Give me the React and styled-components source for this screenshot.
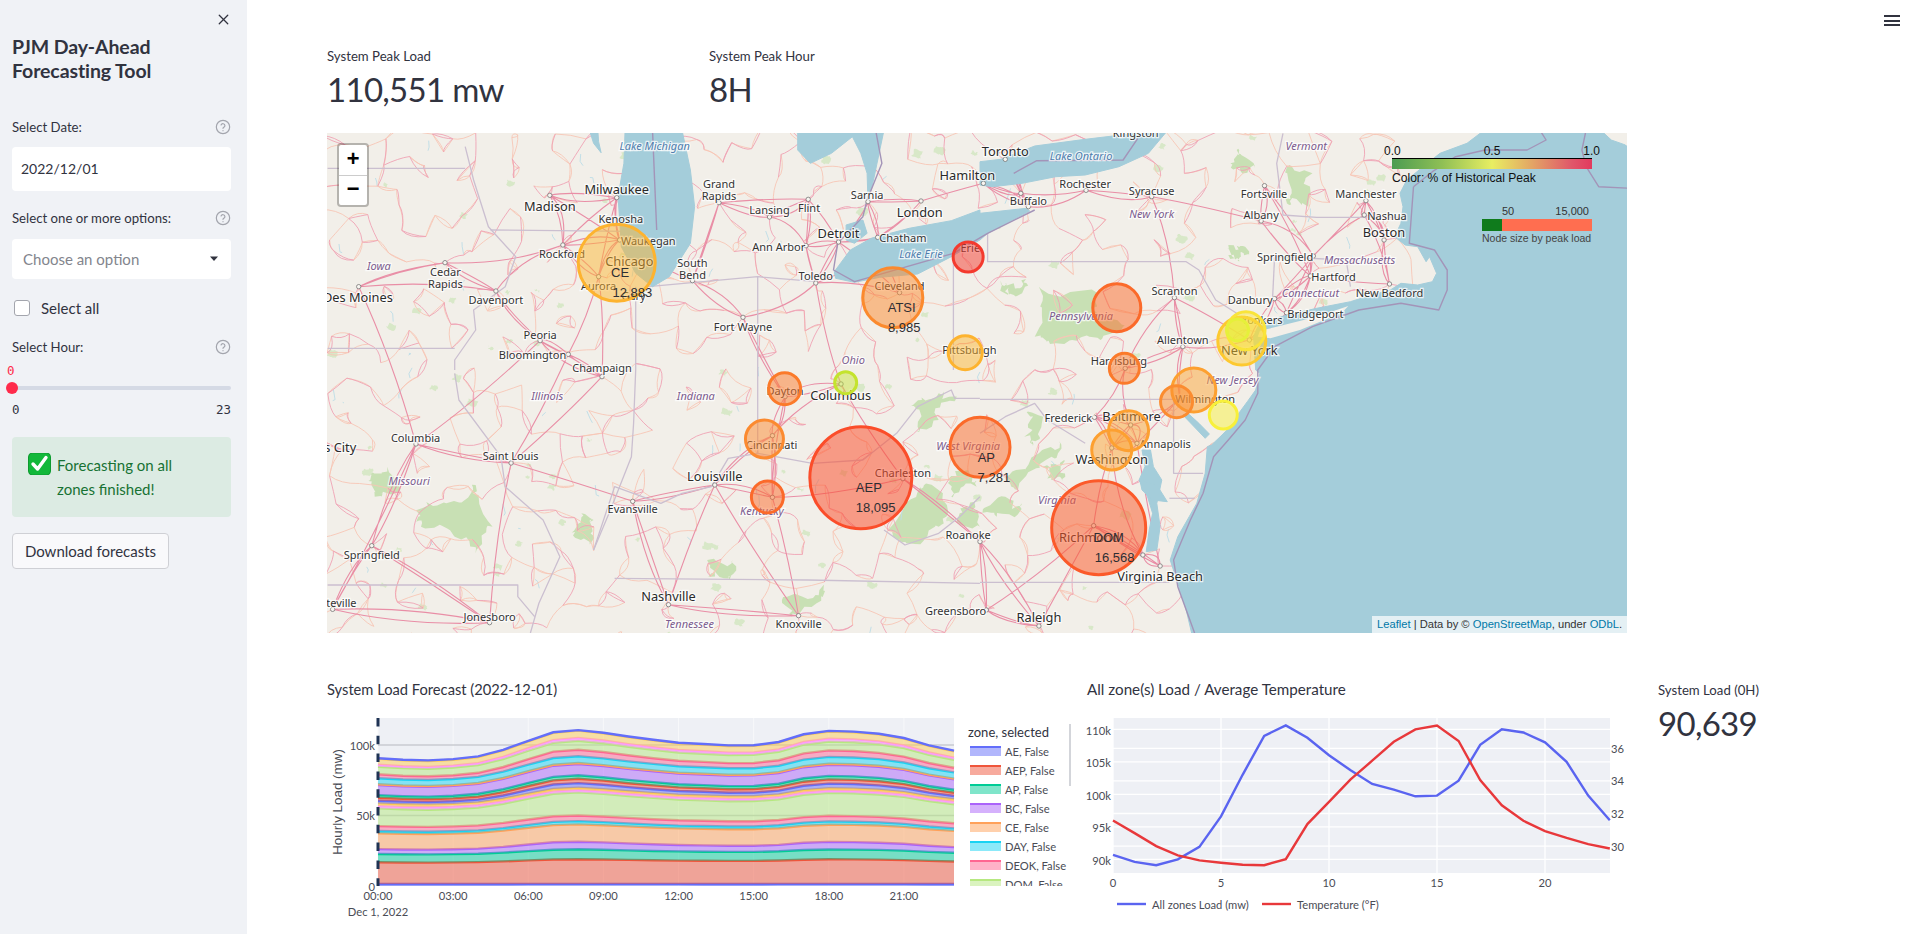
import React from "react";
import styled, { createGlobalStyle } from "styled-components";
import { X } from "lucide-react";

const UI = `Lato, "Noto Sans", sans-serif`;

const Global = createGlobalStyle`
  html, body { margin: 0; padding: 0; height: 100%; overflow: hidden; background: #fff; }
  body { font-family: ${UI}; color: #31333f; }
  * { box-sizing: border-box; }
`;

const Shell = styled.div`display: flex; width: 1912px; height: 934px; overflow: hidden; position: relative;`;
const Sidebar = styled.aside`width: 247px; flex: none; height: 100%; background: #f0f2f6; padding: 0 16px 0 12px;`;
const CloseRow = styled.div`height: 35px; display: flex; justify-content: flex-end; align-items: flex-end; padding: 0 0 7px; margin-right: -1px; color: #31333f;`;
const Title = styled.h1`margin: 0 0 34px; font-size: 19.5px; line-height: 24px; font-weight: 700; color: #31333f; letter-spacing: -0.1px;`;
const LabelRow = styled.div`height: 20px; display: flex; justify-content: space-between; align-items: center; font-size: 13.2px; color: #31333f; margin-top: ${p => p.$top}px;`;
const Field = styled.div`height: ${p => p.$h}px; margin-top: ${p => p.$top}px; background: #fff; border-radius: 4px; display: flex; align-items: center; justify-content: space-between; font-size: ${p => p.$size}px; padding: 0 12px 1px ${p => p.$pad}px; color: ${p => p.$muted ? "#83858d" : "#31333f"};`;
const CheckRow = styled.label`display: flex; align-items: center; gap: 9px; height: 20px; margin-top: 19px; padding-left: 2px; font-size: 15px;`;
const CheckBox = styled.span`width: 16px; height: 16px; background: #fff; border: 1.5px solid #a3a5ad; border-radius: 3px; margin-right: 2px;`;
const SliderBlock = styled.div`position: relative; height: 70px; margin-top: 0;`;
const SliderValue = styled.span`position: absolute; left: -5px; top: 6px; font: 12.5px "DejaVu Sans Mono", monospace; color: #ff2b4b;`;
const Track = styled.div`position: absolute; left: 0; right: 0; top: 29px; height: 4px; border-radius: 2px; background: #d5dae5;`;
const Thumb = styled.div`position: absolute; left: -6px; top: 25px; width: 12px; height: 12px; border-radius: 50%; background: #ff2b4b;`;
const SliderEnds = styled.div`position: absolute; left: 0; right: 0; top: 45px; display: flex; justify-content: space-between; font: 12.5px "DejaVu Sans Mono", monospace; color: #31333f;`;
const Alert = styled.div`margin-top: 10px; height: 80px; padding: 16px 16px 0 16px; border-radius: 4px; background: #dcebe3; color: #177233; display: flex; gap: 6px; font-size: 15px; line-height: 24px;`;
const AlertText = styled.span`width: 130px;`;
const Download = styled.button`display: block; margin-top: 16px; width: 157px; height: 36px; padding: 0 0 1px; background: #f9f9fb; border: 1px solid #cfd0d5; border-radius: 4px; font: 15px ${UI}; color: #31333f;`;

const Main = styled.main`flex: 1; min-width: 0; padding: 46px 0 0 80px;`;
const Menu = styled.div`position: absolute; top: 15px; right: 12px; width: 16px; display: flex; flex-direction: column; gap: 2.5px;`;
const MenuBar = styled.span`height: 2px; background: #31333f;`;
const Metrics = styled.div`display: grid; grid-template-columns: 382px 381px;`;
const MetricLabel = styled.div`font-size: 13.2px; line-height: 20px; color: #31333f;`;
const MetricValue = styled.div`font-size: 33px; line-height: 47px; color: #31333f; letter-spacing: -0.7px; font-weight: 400;`;
const MapFrame = styled.div`position: relative; width: 1300px; height: 500px; margin-top: 20px; overflow: hidden; background: #f2efe9;`;
const MapSvg = styled.svg`display: block; width: 1300px; height: 500px;`;
const Zoom = styled.div`position: absolute; left: 10px; top: 10px; width: 32px; border: 2px solid rgba(0,0,0,.25); border-radius: 4px; background: #fff; background-clip: padding-box; overflow: hidden;`;
const ZoomBtn = styled.div`height: 30px; display: flex; align-items: center; justify-content: center; font: 700 22px "Liberation Mono", monospace; color: #000; & + & { border-top: 1px solid #ccc; }`;
const Attribution = styled.div`position: absolute; right: 0; bottom: 0; height: 17px; padding: 0 5px; background: rgba(255,255,255,.7); font: 11.2px/17px "Liberation Sans", sans-serif; color: #333; white-space: nowrap;`;
const Link = styled.span`color: #0078a8;`;
const ColorLegend = styled.div`position: absolute; left: 1065px; top: 11px; width: 200px; font-family: "Liberation Sans", sans-serif; color: #111;`;
const Ticks = styled.div`display: flex; justify-content: space-between; font-size: 12px; line-height: 14px; margin: 0 -8px 0 -8px;`;
const Gradient = styled.div`height: 11px; border-top: 1px solid #000; background: linear-gradient(90deg, #4c9c52 0%, #8fbf55 25%, #e8ee62 50%, #e3a565 70%, #e0566a 90%, #e23a5e 100%);`;
const Caption = styled.div`font-size: 12.1px; line-height: 16px; margin-top: 1px; white-space: nowrap;`;
const SizeLegend = styled.div`position: absolute; left: 1155px; top: 71px; width: 110px; font-family: "Liberation Sans", sans-serif; color: #333;`;
const SizeTicks = styled.div`display: flex; justify-content: space-between; font-size: 11px; line-height: 14px; padding: 0 3px 0 20px;`;
const SizeBar = styled.div`height: 12px; margin-top: 1px; background: linear-gradient(90deg, #0f7b1c 0 20px, #ff6e50 20px);`;
const SizeCaption = styled.div`font-size: 10.5px; line-height: 14px; white-space: nowrap; color: #444;`;
const BottomRow = styled.div`display: flex; margin: 27px 0 0 1px; height: 260px;`;
const Chart = styled.svg`display: block; flex: none; width: ${p => p.$w}px; height: 260px; overflow: visible;`;
const SideMetric = styled.div`margin-left: 18px; padding-top: 20px;`;

const HelpIcon = () => (
  <svg width="16" height="16" viewBox="0 0 24 24" fill="none" stroke="#a3a5ad" strokeWidth="1.8" strokeLinecap="round">
    <circle cx="12" cy="12" r="10" />
    <path d="M9.1 9a3 3 0 0 1 5.8 1c0 2-2.9 2.6-2.9 4" />
    <path d="M12 17.5h.01" />
  </svg>
);
const Caret = () => (
  <svg width="10" height="6" viewBox="0 0 10 6"><path d="M1 .5h8L5 5z" fill="#31333f" /></svg>
);
const CheckEmoji = () => (
  <svg width="23" height="22" viewBox="0 0 23 22" style={{ flex: "none", marginTop: 0 }}>
    <rect x="0.5" y="0" width="22" height="22" rx="4" fill="#12b83a" />
    <rect x="0.5" y="0" width="22" height="22" rx="4" fill="none" stroke="#0d9a2f" />
    <path d="M5 11l4.6 5L18 4.5" fill="none" stroke="#fff" strokeWidth="3.4" strokeLinecap="round" strokeLinejoin="round" />
  </svg>
);

/* ---------- map drawing ---------- */
const PAN = { a: [-7, -3], b: [653, -3], c: [-7, 237], d: [653, 237] };
const at = (p, x, y) => [PAN[p][0] + x / 2.376, PAN[p][1] + y / 3];
const parse = (p, s) => s.trim().split(/\s+/).map(t => { const [x, y] = t.split(",").map(Number); return at(p, x, y); });
const pointsOf = (...segs) => {
  const pts = [];
  for (let i = 0; i < segs.length; i += 2) pts.push(...parse(segs[i], segs[i + 1]));
  return pts;
};
const toPath = pts => "M" + pts.map(q => q[0].toFixed(1) + " " + q[1].toFixed(1)).join("L");
const poly = (...segs) => toPath(pointsOf(...segs));

let seed = 7;
const rnd = () => { seed = (seed * 16807) % 2147483647; return seed / 2147483647; };
const roughen = (pts, amp) => {
  let cur = pts;
  for (let k = 0; k < 3; k++) {
    const next = [];
    cur.forEach((q, i) => {
      const r = cur[(i + 1) % cur.length];
      next.push(q, [(q[0] + r[0]) / 2 + (rnd() - .5) * amp, (q[1] + r[1]) / 2 + (rnd() - .5) * amp]);
    });
    cur = next;
    amp *= .6;
  }
  return toPath(cur) + "Z";
};

const WATER = [
  poly("a", "640,0 650,40 668,68 662,35 660,0"),
  poly("a", "725,0 722,100 708,200 712,270 716,350 750,430 790,470 830,440 880,340 890,230 880,120 860,0"),
  poly("a", "1135,0 1135,60 1165,100 1215,70 1265,20 1285,70 1300,130 1302,215 1315,150 1340,0"),
  poly("a", "1250,285 1290,270 1300,310 1270,340 1250,330"),
  poly("a", "1222,425 1260,360 1310,325 1400,295 1500,272 1568,240", "b", "0,250 110,235 118,243 18,310 0,330", "a", "1568,330 1500,380 1420,432 1330,442 1270,457 1225,445"),
  poly("b", "0,95 50,88 130,48 250,28 370,10 390,-5 450,-5 400,70 330,110 250,135 180,140 100,160 30,170 0,165"),
  poly("b", "1204,-5 1157,40 1093,70 1053,110 1014,150 998,190 1005,230 1000,280 985,320 1010,345 1040,350 1060,395 1068,380 1085,430 1075,455 1040,465 1000,460 975,480 930,495 880,515 800,535 730,555 690,570 660,590 650,620 655,720", "d", "665,10 655,60 635,95 615,130 610,150 575,195 550,225 540,230 535,310 515,400 497,440 470,500 452,570 470,640 490,720 505,800 1545,800", "b", "1545,50 1500,30 1470,-5"),
  poly("d", "385,240 392,290 378,330 398,380 410,430 402,480 395,545 420,540 428,470 420,400 432,330 412,290 405,240"),
  poly("d", "482,135 505,165 535,205 545,192 520,160 494,130"),
  poly("d", "380,330 420,345 445,395 410,390 385,360"),
];
const LAND_OVER = [
  poly("b", "660,620 690,625 760,600 860,548 875,528 800,560 700,592 665,602"),
  poly("b", "1490,-5 1510,20 1545,55 1545,-5"),
];
const FOREST = [
  pointsOf("b", "140,470 280,490 270,540 340,590 260,620 180,640 130,620"),
  pointsOf("b", "60,460 100,450 100,490 70,490"),
  pointsOf("b", "610,60 640,90 620,125 595,100"),
  pointsOf("b", "730,130 790,130 780,230 735,225"),
  pointsOf("b", "590,345 630,350 620,380 590,375"),
  pointsOf("c", "230,420 300,400 370,345 410,470 370,550 320,500 240,470"),
  pointsOf("c", "1400,110 1470,70 1510,90 1470,150 1420,170"),
  pointsOf("c", "1490,330 1540,300 1560,350 1500,380"),
  pointsOf("c", "1350,480 1420,340 1480,370 1470,470 1400,520"),
  pointsOf("c", "1520,430 1568,390 1568,470"),
  pointsOf("c", "1110,680 1200,640 1180,700 1120,740"),
  pointsOf("c", "920,570 980,570 970,620 930,610"),
  pointsOf("c", "610,470 650,450 650,500 620,510"),
  pointsOf("c", "120,310 160,290 180,370 130,380"),
  pointsOf("d", "120,150 150,140 120,220 105,200"),
  pointsOf("d", "0,430 60,380 100,400 40,440"),
  pointsOf("d", "60,320 140,250 190,220 170,260 90,360"),
  pointsOf("d", "150,290 200,270 190,320 160,320"),
].map(p => roughen(p, 16));
const SPECKS = Array.from({ length: 110 }, () => {
  const x = rnd() * 1060, y = rnd() * 500, s = 3 + rnd() * 7;
  return roughen([[x, y], [x + s, y + s * .3], [x + s * .7, y + s], [x - s * .3, y + s * .7]], 3);
}).join("");
const STREAMS = Array.from({ length: 70 }, () => {
  const x = rnd() * 1060, y = rnd() * 500;
  return `M${x.toFixed(1)} ${y.toFixed(1)}l${(rnd() * 8 - 4).toFixed(1)} ${(rnd() * 10).toFixed(1)}l${(rnd() * 6 - 3).toFixed(1)} ${(rnd() * 8).toFixed(1)}`;
}).join("");
const BORDERS = [
  poly("a", "18,115 345,115"),
  poly("a", "345,50 365,150 400,290 465,380 440,470 365,540 370,600 320,690 320,720"),
  poly("a", "405,300 800,305"),
  poly("a", "18,655 320,655"),
  poly("a", "750,470 750,720"),
  poly("a", "780,470 1040,440 1180,455"),
  poly("a", "1040,440 1040,720"),
  poly("a", "1505,390 1505,720"),
  poly("c", "1040,0 1040,250 970,265 930,350 860,370 810,400 700,350 650,540"),
  poly("c", "750,0 745,160 740,260 690,420 650,540"),
  poly("c", "320,10 330,90 430,260 440,350 530,450 570,560 520,700 500,789"),
  poly("c", "700,625 1160,630 1568,640"),
  poly("c", "18,645 470,645 470,680 510,740"),
  poly("c", "1040,250 1170,280 1290,270 1370,190 1420,110 1500,60 1508,85 1568,85"),
  poly("c", "1340,480 1390,525 1470,490 1520,440 1568,380"),
  poly("d", "0,88 460,88"),
  poly("d", "460,85 460,310 530,310"),
  poly("d", "0,637 450,637"),
  poly("d", "450,385 510,385"),
  poly("d", "0,190 60,140 130,100 160,150 250,220"),
  poly("b", "18,310 18,395 490,395 520,420 560,510 610,550"),
  poly("b", "720,10 705,100 720,255 800,262 1000,262"),
  poly("b", "700,380 870,390 880,470"),
  poly("b", "700,380 695,510"),
];
const SEA_LINES = [
  poly("a", "790,0 800,300"),
  poly("a", "1320,0 1335,100 1300,210 1290,260 1230,340 1220,420 1270,455 1505,370", "b", "18,310 130,240"),
  poly("b", "80,130 135,92 340,90 375,25"),
  poly("b", "1030,170 1020,340 1080,360 1110,420 1110,480 1090,540 1000,520 900,540 790,590 700,650 660,720", "d", "660,70 630,150 590,210 555,260 530,370 500,450 460,570 470,650 510,789"),
  poly("b", "1030,170 1075,125 1130,80 1200,60 1300,60 1345,30 1330,0"),
  poly("b", "1545,175 1470,170 1440,110 1430,60 1440,0"),
];

const CITY = [
  ["a",705,203],["a",546,196],["a",948,218],["a",1068,261],["a",1160,208],["a",1302,215],["a",1428,213],["a",712,330],["a",577,345],["a",885,452],["a",1232,336],["a",1325,322],["a",1155,347],["a",297,398],["a",92,470],["a",418,483],["a",662,440],["a",1178,459],["a",1377,488],["a",1005,562],["a",523,632],["a",590,673],["a",670,740],
  ["c",1238,42],["c",1105,80],["c",1075,197],["c",228,222],["c",454,279],["c",938,345],["c",1385,326],["c",743,394],["c",1075,382],["c",123,527],["c",828,704],["c",403,758],["c",1137,737],["c",30,718],
  ["b",60,88],["b",8,160],["b",252,181],["b",408,200],["b",676,167],["b",917,212],["b",97,190],["b",115,230],["b",668,273],["b",913,255],["b",960,330],["b",792,378],["b",785,438],["b",462,503],["b",973,462],["b",700,506],["b",728,548],["b",482,650],["b",640,630],["b",345,715],
  ["d",475,85],["d",272,142],["d",358,165],["d",373,220],["d",313,234],["d",270,467],["d",387,555],["d",428,588],["d",15,720],["d",140,768],["d",0,515],
].map(([p, x, y]) => at(p, x, y));

const HUBS = [];
for (let x = -10; x < 1090; x += 25) for (let y = -10; y < 520; y += 25) HUBS.push([x + rnd() * 22, y + rnd() * 22]);
const nearest = (q, list, n) => list.filter(o => o !== q).map(o => [Math.hypot(o[0] - q[0], o[1] - q[1]), o]).sort((u, v) => u[0] - v[0]).slice(0, n).map(u => u[1]);
const wiggle = (u, v, amp) => {
  const mx = (u[0] + v[0]) / 2 + (rnd() - .5) * amp, my = (u[1] + v[1]) / 2 + (rnd() - .5) * amp;
  return `M${u[0].toFixed(1)} ${u[1].toFixed(1)}Q${mx.toFixed(1)} ${my.toFixed(1)} ${v[0].toFixed(1)} ${v[1].toFixed(1)}`;
};
const MOTORWAY = CITY.flatMap(c => nearest(c, CITY, 3).map(o => wiggle(c, o, 24))).join("");
const LINKS = HUBS.flatMap(h => nearest(h, HUBS.concat(CITY), 2).map(o => wiggle(h, o, 12)));
const PINK = LINKS.filter((_, i) => i % 5 < 2).join("");
const PEACH = LINKS.filter((_, i) => i % 5 >= 2).join("");

const LABELS = [
  ["a",795,45,"Lake Michigan","w"],["a",705,178,"Milwaukee","l"],["a",546,228,"Madison","l"],["a",948,160,"Grand","s"],["a",948,195,"Rapids","s"],["a",1068,238,"Lansing","s"],["a",1162,232,"Flint","s"],["a",1300,193,"Sarnia","s"],["a",1425,245,"London","l"],["a",715,265,"Kenosha","s"],["a",780,330,"Waukegan","s"],["a",575,370,"Rockford","s"],["a",735,393,"Chicago","l"],["a",885,397,"South","s"],["a",885,432,"Bend","s"],["a",1232,308,"Detroit","l"],["a",1385,323,"Chatham","s"],["a",1090,348,"Ann Arbor","s"],["a",1428,370,"Lake Erie","w"],["a",1545,352,"Erie","s"],["a",140,405,"Iowa","i"],["a",298,425,"Cedar","s"],["a",298,460,"Rapids","s"],["a",90,500,"Des Moines","l"],["a",418,508,"Davenport","s"],["a",662,465,"Aurora","s"],["a",1178,437,"Toledo","s"],["a",1377,465,"Cleveland","s"],["a",1005,590,"Fort Wayne","s"],["a",523,612,"Peoria","s"],["a",505,674,"Bloomington","s"],["a",670,712,"Champaign","s"],["a",1267,688,"Ohio","i"],["a",745,497,"Gary","s"],
  ["c",540,75,"Illinois","i"],["c",893,75,"Indiana","i"],["c",1237,75,"Columbus","l"],["c",1105,60,"Dayton","s"],["c",227,201,"Columbia","s"],["c",5,230,"Kansas City","l"],["c",453,257,"Saint Louis","s"],["c",212,330,"Missouri","i"],["c",1073,222,"Cincinnati","s"],["c",938,318,"Louisville","l"],["c",1385,307,"Charleston","s"],["c",1540,227,"West Virginia","i"],["c",743,416,"Evansville","s"],["c",1050,420,"Kentucky","i"],["c",1540,493,"Roanoke","s"],["c",123,553,"Springfield","s"],["c",18,698,"Fayetteville","s"],["c",828,677,"Nashville","l"],["c",403,738,"Jonesboro","s"],["c",878,760,"Tennessee","i"],["c",1137,760,"Knoxville","s"],["c",1510,720,"Greensboro","s"],
  ["b",60,62,"Toronto","l"],["b",240,75,"Lake Ontario","w"],["b",370,6,"Kingston","s"],["b",775,45,"Vermont","i"],["b",-30,135,"Hamilton","l"],["b",250,160,"Rochester","s"],["b",408,180,"Syracuse","s"],["b",675,190,"Fortsville","s"],["b",917,189,"Manchester","s"],["b",115,210,"Buffalo","s"],["b",408,250,"New York","i"],["b",668,254,"Albany","s"],["b",967,255,"Nashua","s"],["b",960,305,"Boston","l"],["b",725,380,"Springfield","s"],["b",902,388,"Massachusetts","i"],["b",840,440,"Hartford","s"],["b",462,482,"Scranton","s"],["b",973,487,"New Bedford","s"],["b",785,488,"Connecticut","i"],["b",642,508,"Danbury","s"],["b",797,549,"Bridgeport","s"],["b",670,568,"Yonkers","s"],["b",240,556,"Pennsylvania","i"],["b",482,628,"Allentown","s"],["b",640,660,"New York","l"],["b",330,690,"Harrisburg","s"],["b",-25,658,"Pittsburgh","s"],
  ["d",600,27,"New Jersey","i"],["d",535,85,"Wilmington","s"],["d",210,142,"Frederick","s"],["d",360,137,"Baltimore","l"],["d",440,220,"Annapolis","s"],["d",313,266,"Washington","l"],["d",183,387,"Virginia","i"],["d",260,500,"Richmond","l"],["d",428,617,"Virginia Beach","l"],["d",140,741,"Raleigh","l"],
];

const MapLabel = styled.text`
  text-anchor: middle;
  dominant-baseline: central;
  paint-order: stroke;
  stroke: rgba(255,255,255,.75);
  stroke-width: 2.5px;
  font-family: "Noto Sans", sans-serif;
  font-size: ${p => ({ s: 11, l: 12.8, i: 11, w: 11 }[p.$kind])}px;
  font-style: ${p => (p.$kind === "i" || p.$kind === "w") ? "italic" : "normal"};
  fill: ${p => ({ s: "#333", l: "#2a2a2a", i: "#7b5c8e", w: "#4f7dad" }[p.$kind])};
`;
const ZoneText = styled.text`
  text-anchor: middle;
  dominant-baseline: central;
  font-family: "Liberation Sans", sans-serif;
  font-size: 13px;
  fill: #2e2e33;
`;

const NODES = [
  ["a",705,398,38.5,"#fdb32f",.48],
  ["a",1361,503,30,"#fb8a2e",.5],
  ["a",1540,381,15,"#f43a2e",.5],
  ["a",1533,668,17,"#fdb32f",.48],
  ["b",325,533,24,"#fb6a2a",.5],
  ["b",343,715,15,"#fb7a2a",.5],
  ["b",622,633,24,"#fdc92f",.48],
  ["b",632,602,19,"#f9e43a",.48],
  ["b",612,600,11,"#e6f03a",.6],
  ["d",508,60,22,"#fda030",.48],
  ["d",467,95,16,"#fb8c30",.5],
  ["d",578,135,14,"#f8f03a",.48],
  ["d",353,182,20,"#fda030",.48],
  ["d",313,240,20,"#fda030",.48],
  ["d",0,232,30,"#fb6a2a",.5],
  ["d",282,473,47,"#fb5a2a",.52],
  ["c",1104,56,16,"#fb7a2a",.5],
  ["c",1249,38,11,"#c4e32e",.45],
  ["c",1056,207,19,"#fb8a30",.5],
  ["c",1063,381,16,"#fb6a2a",.5],
  ["c",1285,323,51,"#fb4d2a",.52],
];
const ZONE_TEXT = [
  ["a",713,427,"CE"],["a",742,488,"12,883"],["a",1382,533,"ATSI"],["a",1388,592,"8,985"],
  ["d",15,262,"AP"],["d",33,322,"7,281"],["d",306,503,"DOM"],["d",320,562,"16,568"],
  ["c",1304,352,"AEP"],["c",1320,412,"18,095"],
];

const MapDrawing = () => (
  <MapSvg viewBox="0 0 1300 500">
    <rect width="1300" height="500" fill="#f2efe9" />
    {FOREST.map((d, i) => <path key={i} d={d} fill="#c8e0b4" />)}
    <path d={SPECKS} fill="#d8e8c8" />
    <path d={STREAMS} fill="none" stroke="#bcdce6" strokeWidth=".9" />
    <path d={PEACH} fill="none" stroke="#f7c6b6" strokeWidth=".9" />
    <path d={PINK} fill="none" stroke="#efa3b4" strokeWidth=".9" />
    <path d={MOTORWAY} fill="none" stroke="#e98ea6" strokeWidth="1.1" />
    <g fill="none" stroke="#cbbfd0" strokeWidth="1.3" strokeLinejoin="round">
      {BORDERS.map((d, i) => <path key={i} d={d} />)}
    </g>
    {WATER.map((d, i) => <path key={i} d={d + "Z"} fill="#a4cdda" stroke="#a4cdda" strokeWidth="1" strokeLinejoin="round" />)}
    {LAND_OVER.map((d, i) => <path key={i} d={d + "Z"} fill="#f2efe9" />)}
    <g fill="none" stroke="#a394b8" strokeWidth="1.4" strokeLinejoin="round">
      {SEA_LINES.map((d, i) => <path key={i} d={d} />)}
    </g>
    {CITY.map((c, i) => <circle key={i} cx={c[0]} cy={c[1]} r="2.2" fill="#f7f5f0" stroke="#777" strokeWidth=".8" />)}
    {LABELS.map(([p, x, y, t, k], i) => {
      const q = at(p, x, y);
      return <MapLabel key={i} x={q[0]} y={q[1]} $kind={k}>{t}</MapLabel>;
    })}
    {NODES.map(([p, x, y, r, col, op], i) => {
      const q = at(p, x, y);
      return <circle key={i} cx={q[0]} cy={q[1]} r={r} fill={col} fillOpacity={op} stroke={col} strokeWidth="3" />;
    })}
    {ZONE_TEXT.map(([p, x, y, t], i) => {
      const q = at(p, x, y);
      return <ZoneText key={i} x={q[0]} y={q[1]}>{t}</ZoneText>;
    })}
  </MapSvg>
);

/* ---------- charts ---------- */
const LOAD = [90.67,89.6,89.1,90,91.9,96.6,103,109,110.6,108.7,106,103.7,101.6,100.7,99.7,99.8,102.1,107.6,110,109.5,108,105,99.8,96];
const TEMP = [31.57,30.8,30,29.43,29.12,28.98,28.85,28.83,29.2,31.35,32.72,34.09,35.24,36.4,37.16,37.39,36.45,34.05,32.5,31.55,30.92,30.5,30.12,29.85];
const C0 = [1.4,16.8,22.7,26.2,37.4,39,42.5,55,56.7,58.6,60.5,62.6,64.5,71.6,72.1,76.4,79.2,84.6,86,90.2,90.67];
const C8 = [1.5,19,26,31.4,43.7,46,50,66.4,68,69.7,73,76,78.5,86.5,87.2,92,96.7,103,105,110.2,110.6];
const COLORS = ["#636EFA","#EF553B","#00CC96","#AB63FA","#FFA15A","#19D3F3","#FF6692","#B6E880","#FF97FF","#FECB52"];
const ZONES = ["AE","AEP","AP","BC","CE","DAY","DEOK","DOM"];
const colorAt = i => COLORS[i % COLORS.length];
const ax = h => 50 + h * (576 / 23);
const ay = v => 226 - 1.41 * v;
const frac = h => (LOAD[h] - LOAD[0]) / (LOAD[8] - LOAD[0]);
const cum = (i, h) => i < 0 ? 0 : C0[i] + (C8[i] - C0[i]) * frac(h);
const HOURS = LOAD.map((_, h) => h);

const TickText = styled.text`
  font-family: ${UI};
  font-size: 11.2px;
  fill: #4a4c55;
  dominant-baseline: central;
  text-anchor: ${p => p.$anchor || "middle"};
`;
const ChartTitle = styled.text`font-family: ${UI}; font-size: ${p => p.$size}px; fill: #31333f; dominant-baseline: central;`;
const LegendTitle = styled.text`font-family: ${UI}; font-size: 13px; fill: #31333f; dominant-baseline: central;`;
const AxisTitle = styled.text`font-family: "Liberation Sans", sans-serif; font-size: 13.4px; fill: #4a4c55; text-anchor: middle; dominant-baseline: central;`;

const AreaChart = () => (
  <Chart $w={750} viewBox="0 0 750 260">
    <defs>
      <clipPath id="legendClip"><rect x="630" y="60" width="120" height="166" /></clipPath>
    </defs>
    <ChartTitle x="-1" y="29" $size={14.7}>System Load Forecast (2022-12-01)</ChartTitle>
    <rect x="50" y="58" width="576" height="168" fill="#eef0f5" />
    {[0,3,6,9,12,15,18,21].map(h => <line key={h} x1={ax(h)} x2={ax(h)} y1="58" y2="226" stroke="#f7f8fa" />)}
    {[50,100].map(v => <line key={v} x1="50" x2="626" y1={ay(v)} y2={ay(v)} stroke="#c9cbd1" strokeWidth="1.3" />)}
    {C0.map((_, i) => {
      const top = HOURS.map(h => `${ax(h).toFixed(1)} ${ay(cum(i, h)).toFixed(1)}`);
      const bot = HOURS.slice().reverse().map(h => `${ax(h).toFixed(1)} ${ay(cum(i - 1, h)).toFixed(1)}`);
      return (
        <g key={i}>
          <path d={"M" + top.concat(bot).join("L") + "Z"} fill={colorAt(i)} fillOpacity=".5" />
          <path d={"M" + top.join("L")} fill="none" stroke={colorAt(i)} strokeWidth="2.4" />
        </g>
      );
    })}
    <line x1="50" x2="50" y1="58" y2="226" stroke="#1f3354" strokeWidth="3" strokeDasharray="8.5 9.3" />
    <TickText x="47" y={ay(100)} $anchor="end">100k</TickText>
    <TickText x="47" y={ay(50)} $anchor="end">50k</TickText>
    <TickText x="47" y={ay(0)} $anchor="end">0</TickText>
    <AxisTitle x="9" y="142" transform="rotate(-90 9 142)">Hourly Load (mw)</AxisTitle>
    {[0,3,6,9,12,15,18,21].map(h => <TickText key={h} x={ax(h)} y="235">{String(h).padStart(2, "0")}:00</TickText>)}
    <TickText x="50" y="251">Dec 1, 2022</TickText>
    <LegendTitle x="640" y="72">zone, selected</LegendTitle>
    <g clipPath="url(#legendClip)">
      {ZONES.map((z, i) => {
        const y = 91 + i * 19;
        return (
          <g key={z}>
            <rect x="642" y={y - 5} width="31" height="10" fill={colorAt(i)} fillOpacity=".5" />
            <line x1="642" x2="673" y1={y - 4} y2={y - 4} stroke={colorAt(i)} strokeWidth="2" />
            <TickText x="677" y={y} $anchor="start">{z}, False</TickText>
          </g>
        );
      })}
    </g>
    <line x1="742" x2="742" y1="64" y2="126" stroke="#c5c7ce" strokeWidth="1.5" />
  </Chart>
);

const lx = h => 35 + h * 21.6;
const ly = v => 69.3 + (110 - v) * 6.5;
const ty = t => 88.3 + (36 - t) * 16.3;
const LineChart = () => (
  <Chart $w={562} viewBox="0 0 562 260">
    <ChartTitle x="9" y="29" $size={15.2}>All zone(s) Load / Average Temperature</ChartTitle>
    <rect x="35" y="58" width="497" height="155" fill="#eef0f5" />
    {[0,5,10,15,20].map(h => <line key={h} x1={lx(h)} x2={lx(h)} y1="58" y2="213" stroke="#fff" strokeWidth="1.3" />)}
    {[90,95,100,105,110].map(v => <line key={v} x1="35" x2="532" y1={ly(v)} y2={ly(v)} stroke="#fff" strokeWidth="1.3" />)}
    {[30,32,34,36].map(v => <line key={v} x1="35" x2="532" y1={ty(v)} y2={ty(v)} stroke="#fff" strokeWidth="1.3" />)}
    <path d={"M" + LOAD.map((v, h) => `${lx(h).toFixed(1)} ${ly(v).toFixed(1)}`).join("L")} fill="none" stroke="#5a64f0" strokeWidth="2.4" />
    <path d={"M" + TEMP.map((v, h) => `${lx(h).toFixed(1)} ${ty(v).toFixed(1)}`).join("L")} fill="none" stroke="#e8383b" strokeWidth="2.4" />
    {[90,95,100,105,110].map(v => <TickText key={v} x="33" y={ly(v) + 1} $anchor="end">{v}k</TickText>)}
    {[30,32,34,36].map(v => <TickText key={v} x="533" y={ty(v)} $anchor="start">{v}</TickText>)}
    {[0,5,10,15,20].map(h => <TickText key={h} x={lx(h)} y="222">{h}</TickText>)}
    <line x1="39" x2="68" y1="244" y2="244" stroke="#5a64f0" strokeWidth="2.4" />
    <TickText x="74" y="244" $anchor="start">All zones Load (mw)</TickText>
    <line x1="184" x2="213" y1="244" y2="244" stroke="#e8383b" strokeWidth="2.4" />
    <TickText x="219" y="244" $anchor="start">Temperature (°F)</TickText>
  </Chart>
);

export default function App() {
  return (
    <Shell>
      <Global />
      <Sidebar>
        <CloseRow><X size={17} strokeWidth={1.8} /></CloseRow>
        <Title>PJM Day-Ahead<br />Forecasting Tool</Title>
        <LabelRow $top={0}><span>Select Date:</span><HelpIcon /></LabelRow>
        <Field $h={44} $top={10} $pad={9} $size={14}>2022/12/01</Field>
        <LabelRow $top={17}><span>Select one or more options:</span><HelpIcon /></LabelRow>
        <Field $h={40} $top={11} $pad={11} $size={15} $muted>Choose an option<Caret /></Field>
        <CheckRow><CheckBox />Select all</CheckRow>
        <LabelRow $top={19}><span>Select Hour:</span><HelpIcon /></LabelRow>
        <SliderBlock>
          <SliderValue>0</SliderValue>
          <Track />
          <Thumb />
          <SliderEnds><span>0</span><span>23</span></SliderEnds>
        </SliderBlock>
        <Alert><CheckEmoji /><AlertText>Forecasting on all zones finished!</AlertText></Alert>
        <Download>Download forecasts</Download>
      </Sidebar>
      <Main>
        <Menu><MenuBar /><MenuBar /><MenuBar /></Menu>
        <Metrics>
          <div><MetricLabel>System Peak Load</MetricLabel><MetricValue>110,551 mw</MetricValue></div>
          <div><MetricLabel>System Peak Hour</MetricLabel><MetricValue>8H</MetricValue></div>
        </Metrics>
        <MapFrame>
          <MapDrawing />
          <Zoom><ZoomBtn>+</ZoomBtn><ZoomBtn>−</ZoomBtn></Zoom>
          <ColorLegend>
            <Ticks><span>0.0</span><span>0.5</span><span>1.0</span></Ticks>
            <Gradient />
            <Caption>Color: % of Historical Peak</Caption>
          </ColorLegend>
          <SizeLegend>
            <SizeTicks><span>50</span><span>15,000</span></SizeTicks>
            <SizeBar />
            <SizeCaption>Node size by peak load</SizeCaption>
          </SizeLegend>
          <Attribution><Link>Leaflet</Link> | Data by © <Link>OpenStreetMap</Link>, under <Link>ODbL</Link>.</Attribution>
        </MapFrame>
        <BottomRow>
          <AreaChart />
          <LineChart />
          <SideMetric>
            <MetricLabel>System Load (0H)</MetricLabel>
            <MetricValue>90,639</MetricValue>
          </SideMetric>
        </BottomRow>
      </Main>
    </Shell>
  );
}
